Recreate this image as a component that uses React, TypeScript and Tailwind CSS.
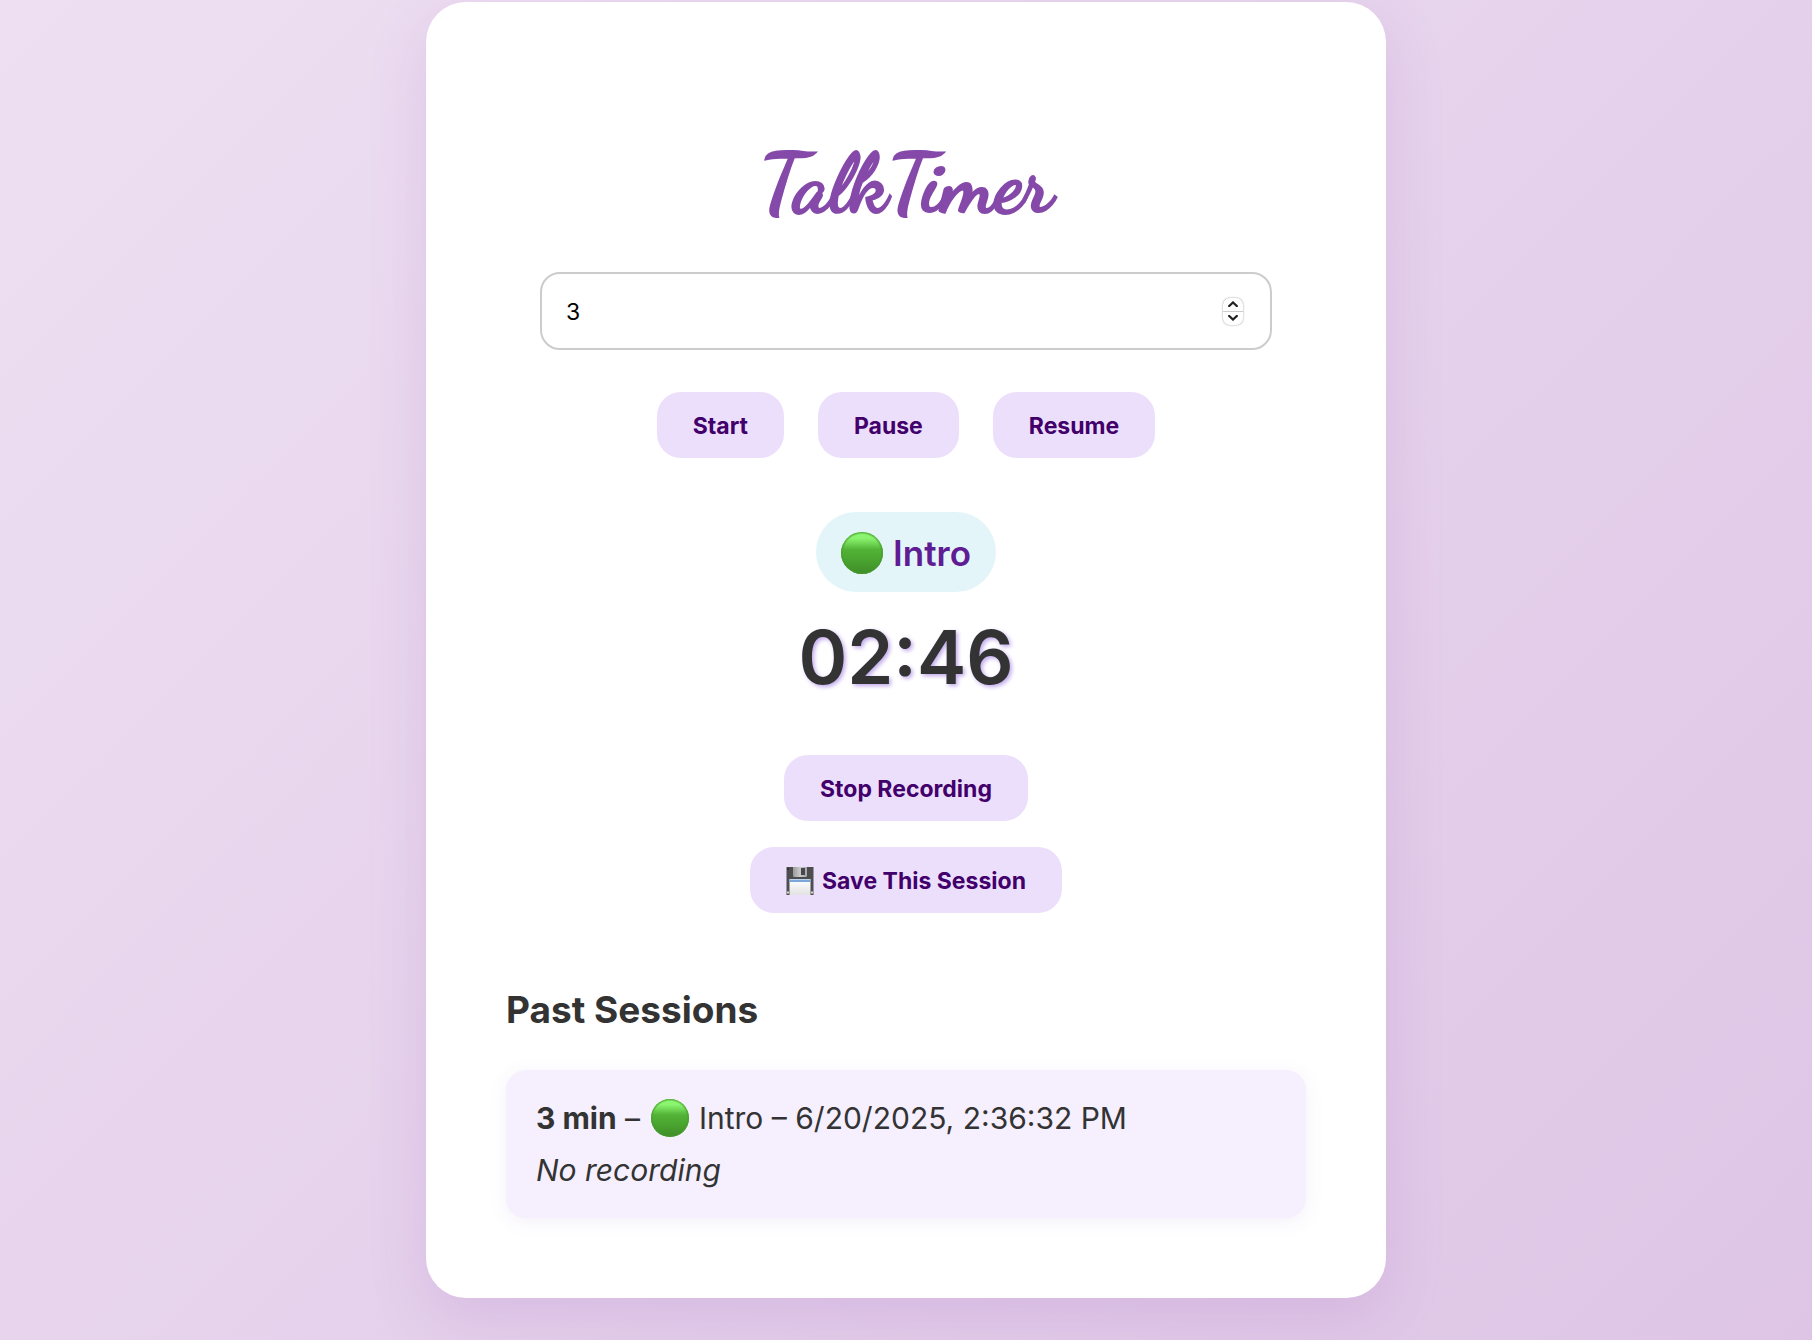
import { useState } from 'react';

function GreenCircle({ className }: { className: string }) {
  return (
    <svg viewBox="0 0 42 42" className={className} role="img" aria-label="Green circle">
      <defs>
        <linearGradient id="green-body" x1="0" y1="0" x2="0" y2="1">
          <stop offset="0" stopColor="#8df771" />
          <stop offset="0.15" stopColor="#8af46e" />
          <stop offset="0.42" stopColor="#52b236" />
          <stop offset="0.6" stopColor="#4ca931" />
          <stop offset="1" stopColor="#3f8c28" />
        </linearGradient>
        <radialGradient id="green-rim" cx="0.5" cy="0.5" r="0.5">
          <stop offset="0.88" stopColor="#459a2c" stopOpacity="0" />
          <stop offset="1" stopColor="#459a2c" stopOpacity="0.9" />
        </radialGradient>
      </defs>
      <circle cx="21" cy="21" r="21" fill="url(#green-body)" />
      <circle cx="21" cy="21" r="21" fill="url(#green-rim)" />
    </svg>
  );
}

function Floppy() {
  return (
    <svg viewBox="0 0 28 28" className="size-7" aria-hidden="true">
      <defs>
        <linearGradient id="shutter" x1="0" y1="0" x2="1" y2="0">
          <stop offset="0" stopColor="#9b9b9b" />
          <stop offset="0.5" stopColor="#c9c9c9" />
          <stop offset="1" stopColor="#a6a6a6" />
        </linearGradient>
        <linearGradient id="paper" x1="0" y1="0" x2="0" y2="1">
          <stop offset="0" stopColor="#ffffff" />
          <stop offset="1" stopColor="#e2e2e2" />
        </linearGradient>
      </defs>
      <path d="M0.5 0H27.5V28H0.5Z" fill="#4d4d4f" />
      <path d="M7 0H21V8.5Q21 10 19.5 10H8.5Q7 10 7 8.5Z" fill="url(#shutter)" />
      <rect x="15" y="1" width="4" height="7" fill="#48484a" />
      <rect x="3.5" y="12" width="21" height="16" fill="url(#paper)" />
      <rect x="3.5" y="12.5" width="21" height="2.5" fill="#7aa7d8" />
      <rect x="1" y="24.5" width="2" height="2" fill="#d8d8d8" />
      <rect x="25" y="24.5" width="2" height="2" fill="#d8d8d8" />
      <rect x="1" y="1" width="2" height="2" fill="#343436" />
    </svg>
  );
}

const buttonClass =
  'flex h-[66px] items-center justify-center gap-2 rounded-3xl bg-[#ecdffc] px-9 pt-[2px] text-[23px] font-bold text-[#42006b]';

const stepClass = 'flex h-[13px] w-5 items-center justify-center bg-white text-[#222]';

export default function App() {
  const [minutes, setMinutes] = useState(3);

  return (
    <div className="min-h-screen bg-linear-135 from-[#eee0f2] to-[#dec5e6] pt-[2px] pb-[43px] font-[Inter,sans-serif] text-[#333]">
      <main className="mx-auto flex w-full max-w-[960px] flex-col items-center rounded-[40px] bg-white px-20 pt-[134px] pb-20 shadow-[0_20px_60px_rgba(142,68,173,0.15)]">
        <h1 className="font-['Dancing_Script',cursive] text-[81px] leading-[96px] font-bold text-[#8549a9] [-webkit-text-stroke:2px_#8549a9]">
          TalkTimer
        </h1>

        <div className="mt-10 flex h-[78px] w-full max-w-[732px] items-center rounded-[20px] border-2 border-[#ccc] pr-[27px] pl-6">
          <input
            type="number"
            aria-label="Talk length in minutes"
            value={minutes}
            onChange={(e) => setMinutes(Number(e.target.value))}
            className="min-w-0 flex-1 appearance-none pt-[2px] text-[23px] text-black outline-none [-moz-appearance:textfield] [&::-webkit-inner-spin-button]:appearance-none"
          />
          <div className="flex flex-col gap-px overflow-hidden rounded-[7px] bg-[#ccc] shadow-[0_0_2px_rgba(0,0,0,0.45)]">
            <button type="button" aria-label="Increase" className={stepClass} onClick={() => setMinutes(minutes + 1)}>
              <svg viewBox="0 0 10 6" className="h-[6px] w-[10px]" fill="none" stroke="currentColor" strokeWidth="2.3">
                <path d="M1.2 5 5 1.5 8.8 5" strokeLinecap="round" />
              </svg>
            </button>
            <button type="button" aria-label="Decrease" className={stepClass} onClick={() => setMinutes(minutes - 1)}>
              <svg viewBox="0 0 10 6" className="h-[6px] w-[10px]" fill="none" stroke="currentColor" strokeWidth="2.3">
                <path d="M1.2 1 5 4.5 8.8 1" strokeLinecap="round" />
              </svg>
            </button>
          </div>
        </div>

        <div className="mt-[42px] flex flex-wrap justify-center gap-[34px]">
          <button type="button" className={buttonClass}>Start</button>
          <button type="button" className={buttonClass}>Pause</button>
          <button type="button" className={buttonClass}>Resume</button>
        </div>

        <div className="mt-[54px] flex h-20 items-center gap-[10px] rounded-[40px] bg-[#e3f5f9] px-[25px] pt-[2px] text-[35px] font-semibold text-[#5f1c93]">
          <GreenCircle className="size-[42px]" />
          Intro
        </div>

        <div className="mt-[18px] text-[74px] leading-[94px] font-semibold [text-shadow:2px_2px_4px_#c0a8ec]">
          02:46
        </div>

        <button type="button" className={`mt-[51px] ${buttonClass}`}>Stop Recording</button>
        <button type="button" className={`mt-[26px] ${buttonClass}`}>
          <Floppy />
          Save This Session
        </button>

        <section className="mt-[74px] w-full">
          <h2 className="text-[37px] leading-[46px] font-bold">Past Sessions</h2>
          <ul className="mt-[37px]">
            <li className="rounded-[20px] bg-[#f5effe] px-[30px] py-[22px] text-[30px] leading-[52px] shadow-[0_4px_20px_rgba(103,58,183,0.08)]">
              <p>
                <strong className="font-bold">3 min</strong> –{' '}
                <GreenCircle className="mx-[2px] mb-[5px] inline-block size-[38px]" /> Intro – 6/20/2025, 2:36:32 PM
              </p>
              <p className="italic">No recording</p>
            </li>
          </ul>
        </section>
      </main>
    </div>
  );
}
